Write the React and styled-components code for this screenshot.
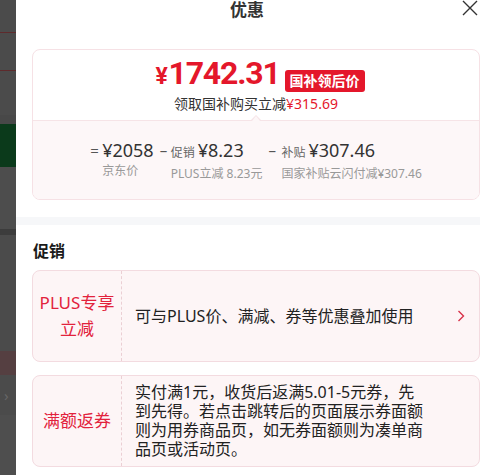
import React from 'react';
import styled, { createGlobalStyle } from 'styled-components';

const GlobalStyle = createGlobalStyle`
    html, body {
        margin: 0;
        padding: 0;
        background: #4b4b4b;
        overflow: hidden;
    }
    * {
        box-sizing: border-box;
    }
`;

const FONT = `"Noto Sans", "Noto Sans CJK SC", sans-serif`;
const NUM_FONT = `"Roboto", "Noto Sans CJK SC", sans-serif`;

const Page = styled.div`
    display: flex;
    width: 480px;
    height: 475px;
    overflow: hidden;
    font-family: ${FONT};
`;

/* the dimmed page that peeks out behind the sheet */
const Backdrop = styled.div`
    width: 16px;
    flex-shrink: 0;
    display: flex;
    flex-direction: column;
    background: #4b4b4b;
    overflow: hidden;
`;

const Strip = styled.div`
    height: ${props => props.h}px;
    flex-shrink: 0;
    background: ${props => props.bg || '#4b4b4b'};
    border-bottom: ${props => props.line ? `1px solid ${props.line}` : 'none'};
    color: ${props => props.ink || '#2a2a2a'};
    font-size: 15px;
    line-height: ${props => props.h}px;
    white-space: nowrap;
    overflow: hidden;
`;

const Panel = styled.div`
    width: 480px;
    flex-shrink: 0;
    margin-top: -14px;
    background: #fff;
    color: #333;
`;

const Header = styled.div`
    height: 44px;
    display: grid;
    grid-template-columns: 1fr auto 1fr;
    align-items: center;
    padding-right: 18px;
`;

const Title = styled.div`
    grid-column: 2;
    font-size: 17px;
    font-weight: 700;
    color: #333;
`;

const Close = styled.div`
    grid-column: 3;
    justify-self: end;
    display: flex;
    width: 16px;
    height: 16px;
`;

const Content = styled.div`
    padding: 19px 16px 0;
`;

const PriceCard = styled.div`
    border: 1px solid #f6e1e5;
    border-radius: 8px;
    overflow: hidden;
`;

const PriceTop = styled.div`
    padding: 10px 0 6px 8px;
    display: flex;
    flex-direction: column;
    align-items: center;
`;

const PriceRow = styled.div`
    display: flex;
    align-items: flex-end;
    gap: 5px;
    height: 34px;
`;

const Price = styled.div`
    font-family: ${NUM_FONT};
    color: #e4172b;
    font-weight: 700;
    font-size: 32px;
    line-height: 34px;
    letter-spacing: -1.2px;
`;

const Yen = styled.span`
    font-size: 23px;
    margin-right: 2px;
`;

const Tag = styled.div`
    height: 22px;
    margin-bottom: 2px;
    padding: 0 5px;
    border-radius: 3px;
    background: #e4172b;
    color: #fff;
    font-size: 14px;
    font-weight: 700;
    line-height: 22px;
`;

const SubLine = styled.div`
    margin-left: -8px;
    font-size: 14px;
    line-height: 20px;
    color: #333;
`;

const Red = styled.span`
    color: #e4172b;
`;

const PriceBottom = styled.div`
    position: relative;
    background: #fdf7f8;
    border-top: 1px solid #f6e4e7;
    padding: 17px 0 16px;
    display: flex;
    justify-content: center;
    gap: 6px;

    &::before {
        content: '';
        position: absolute;
        top: -6px;
        left: 50%;
        margin-left: -5px;
        border: 5px solid transparent;
        border-bottom: 5px solid #f6e4e7;
        border-top: none;
    }
    &::after {
        content: '';
        position: absolute;
        top: -5px;
        left: 50%;
        margin-left: -4px;
        border: 4px solid transparent;
        border-bottom: 5px solid #fdf7f8;
        border-top: none;
    }
`;

const Term = styled.div`
    display: flex;
`;

const Op = styled.div`
    font-size: 15px;
    line-height: 24px;
    color: #555;
    width: ${props => props.w}px;
`;

const TermBody = styled.div`
    display: flex;
    flex-direction: column;
`;

const TermValue = styled.div`
    display: flex;
    align-items: baseline;
    gap: 3px;
    font-size: 18px;
    line-height: 24px;
    color: #333;
`;

const TermTag = styled.span`
    font-size: 12px;
    color: #666;
`;

const TermLabel = styled.div`
    font-size: 12px;
    line-height: 18px;
    color: #999;
    white-space: nowrap;
`;

const Band = styled.div`
    height: 8px;
    margin-top: 17px;
    background: #f6f7f9;
`;

const Section = styled.div`
    padding: 14px 16px 0;
`;

const SectionTitle = styled.div`
    font-size: 16px;
    font-weight: 700;
    line-height: 24px;
    color: #1a1a1a;
    padding-left: 1px;
    margin-bottom: 7px;
`;

const PromoList = styled.div`
    display: flex;
    flex-direction: column;
    gap: 13px;
`;

const Promo = styled.div`
    display: flex;
    min-height: 92px;
    background: #fdf5f6;
    border: 1px solid #f3dbe0;
    border-radius: 8px;
`;

const PromoKind = styled.div`
    width: 89px;
    flex-shrink: 0;
    display: flex;
    align-items: center;
    justify-content: center;
    text-align: center;
    border-right: 1px dashed #ebcfd4;
    color: #e2223c;
    font-size: 17px;
    line-height: 26px;
`;

const PromoText = styled.div`
    flex: 1;
    display: flex;
    align-items: center;
    gap: 8px;
    padding: 7px ${props => props.arrow ? 14 : 54}px 7px 13px;
    font-size: 16px;
    line-height: 19px;
    color: #222;
`;

const PromoCopy = styled.div`
    flex: 1;
`;

const Chevron = styled.svg`
    width: 8px;
    height: 12px;
    flex-shrink: 0;
`;

const terms = [
    { op: '=', opW: 12, value: '¥2058', label: '京东价' },
    { op: '–', opW: 11, tag: '促销', value: '¥8.23', label: 'PLUS立减 8.23元' },
    { op: '–', opW: 13, tag: '补贴', value: '¥307.46', label: '国家补贴云闪付减¥307.46' },
];

const promos = [
    { kind: ['PLUS专享', '立减'], text: '可与PLUS价、满减、券等优惠叠加使用', arrow: true },
    {
        kind: ['满额返券'],
        text: '实付满1元，收货后返满5.01-5元券，先到先得。若点击跳转后的页面展示券面额则为用券商品页，如无券面额则为凑单商品页或活动页。',
    },
];

export default function App() {
    return (
        <>
            <GlobalStyle />
            <Page>
                <Backdrop>
                    <Strip h={33} line="#5e2a2c" />
                    <Strip h={38} line="#5e2a2c" />
                    <Strip h={44} ink="#2e2e2e" />
                    <Strip h={9} bg="#484848" />
                    <Strip h={43} bg="#0b3a1b" />
                    <Strip h={62} bg="#4d4d4d" />
                    <Strip h={6} bg="#3c3c3c" />
                    <Strip h={46} />
                    <Strip h={70} />
                    <Strip h={24} bg="#553f41" />
                    <Strip h={40} ink="#666">&nbsp;›</Strip>
                    <Strip h={60} bg="#4e4e4e" />
                </Backdrop>
                <Panel>
                    <Header>
                        <Title>优惠</Title>
                        <Close>
                            <svg width="16" height="16" viewBox="0 0 16 16">
                                <path d="M1 1 L15 15 M15 1 L1 15" stroke="#333" strokeWidth="1.4" fill="none" />
                            </svg>
                        </Close>
                    </Header>
                    <Content>
                        <PriceCard>
                            <PriceTop>
                                <PriceRow>
                                    <Price><Yen>¥</Yen>1742.31</Price>
                                    <Tag>国补领后价</Tag>
                                </PriceRow>
                                <SubLine>领取国补购买立减<Red>¥315.69</Red></SubLine>
                            </PriceTop>
                            <PriceBottom>
                                {terms.map(t => (
                                    <Term key={t.label}>
                                        <Op w={t.opW}>{t.op}</Op>
                                        <TermBody>
                                            <TermValue>
                                                {t.tag && <TermTag>{t.tag}</TermTag>}
                                                {t.value}
                                            </TermValue>
                                            <TermLabel>{t.label}</TermLabel>
                                        </TermBody>
                                    </Term>
                                ))}
                            </PriceBottom>
                        </PriceCard>
                    </Content>
                    <Band />
                    <Section>
                        <SectionTitle>促销</SectionTitle>
                        <PromoList>
                            {promos.map(p => (
                                <Promo key={p.kind.join('')}>
                                    <PromoKind>
                                        <div>
                                            {p.kind.map(line => <div key={line}>{line}</div>)}
                                        </div>
                                    </PromoKind>
                                    <PromoText arrow={p.arrow}>
                                        <PromoCopy>{p.text}</PromoCopy>
                                        {p.arrow && (
                                            <Chevron viewBox="0 0 8 12">
                                                <path d="M1.5 1 L6.5 6 L1.5 11" stroke="#d8334a" strokeWidth="1.4" fill="none" />
                                            </Chevron>
                                        )}
                                    </PromoText>
                                </Promo>
                            ))}
                        </PromoList>
                    </Section>
                </Panel>
            </Page>
        </>
    );
}
